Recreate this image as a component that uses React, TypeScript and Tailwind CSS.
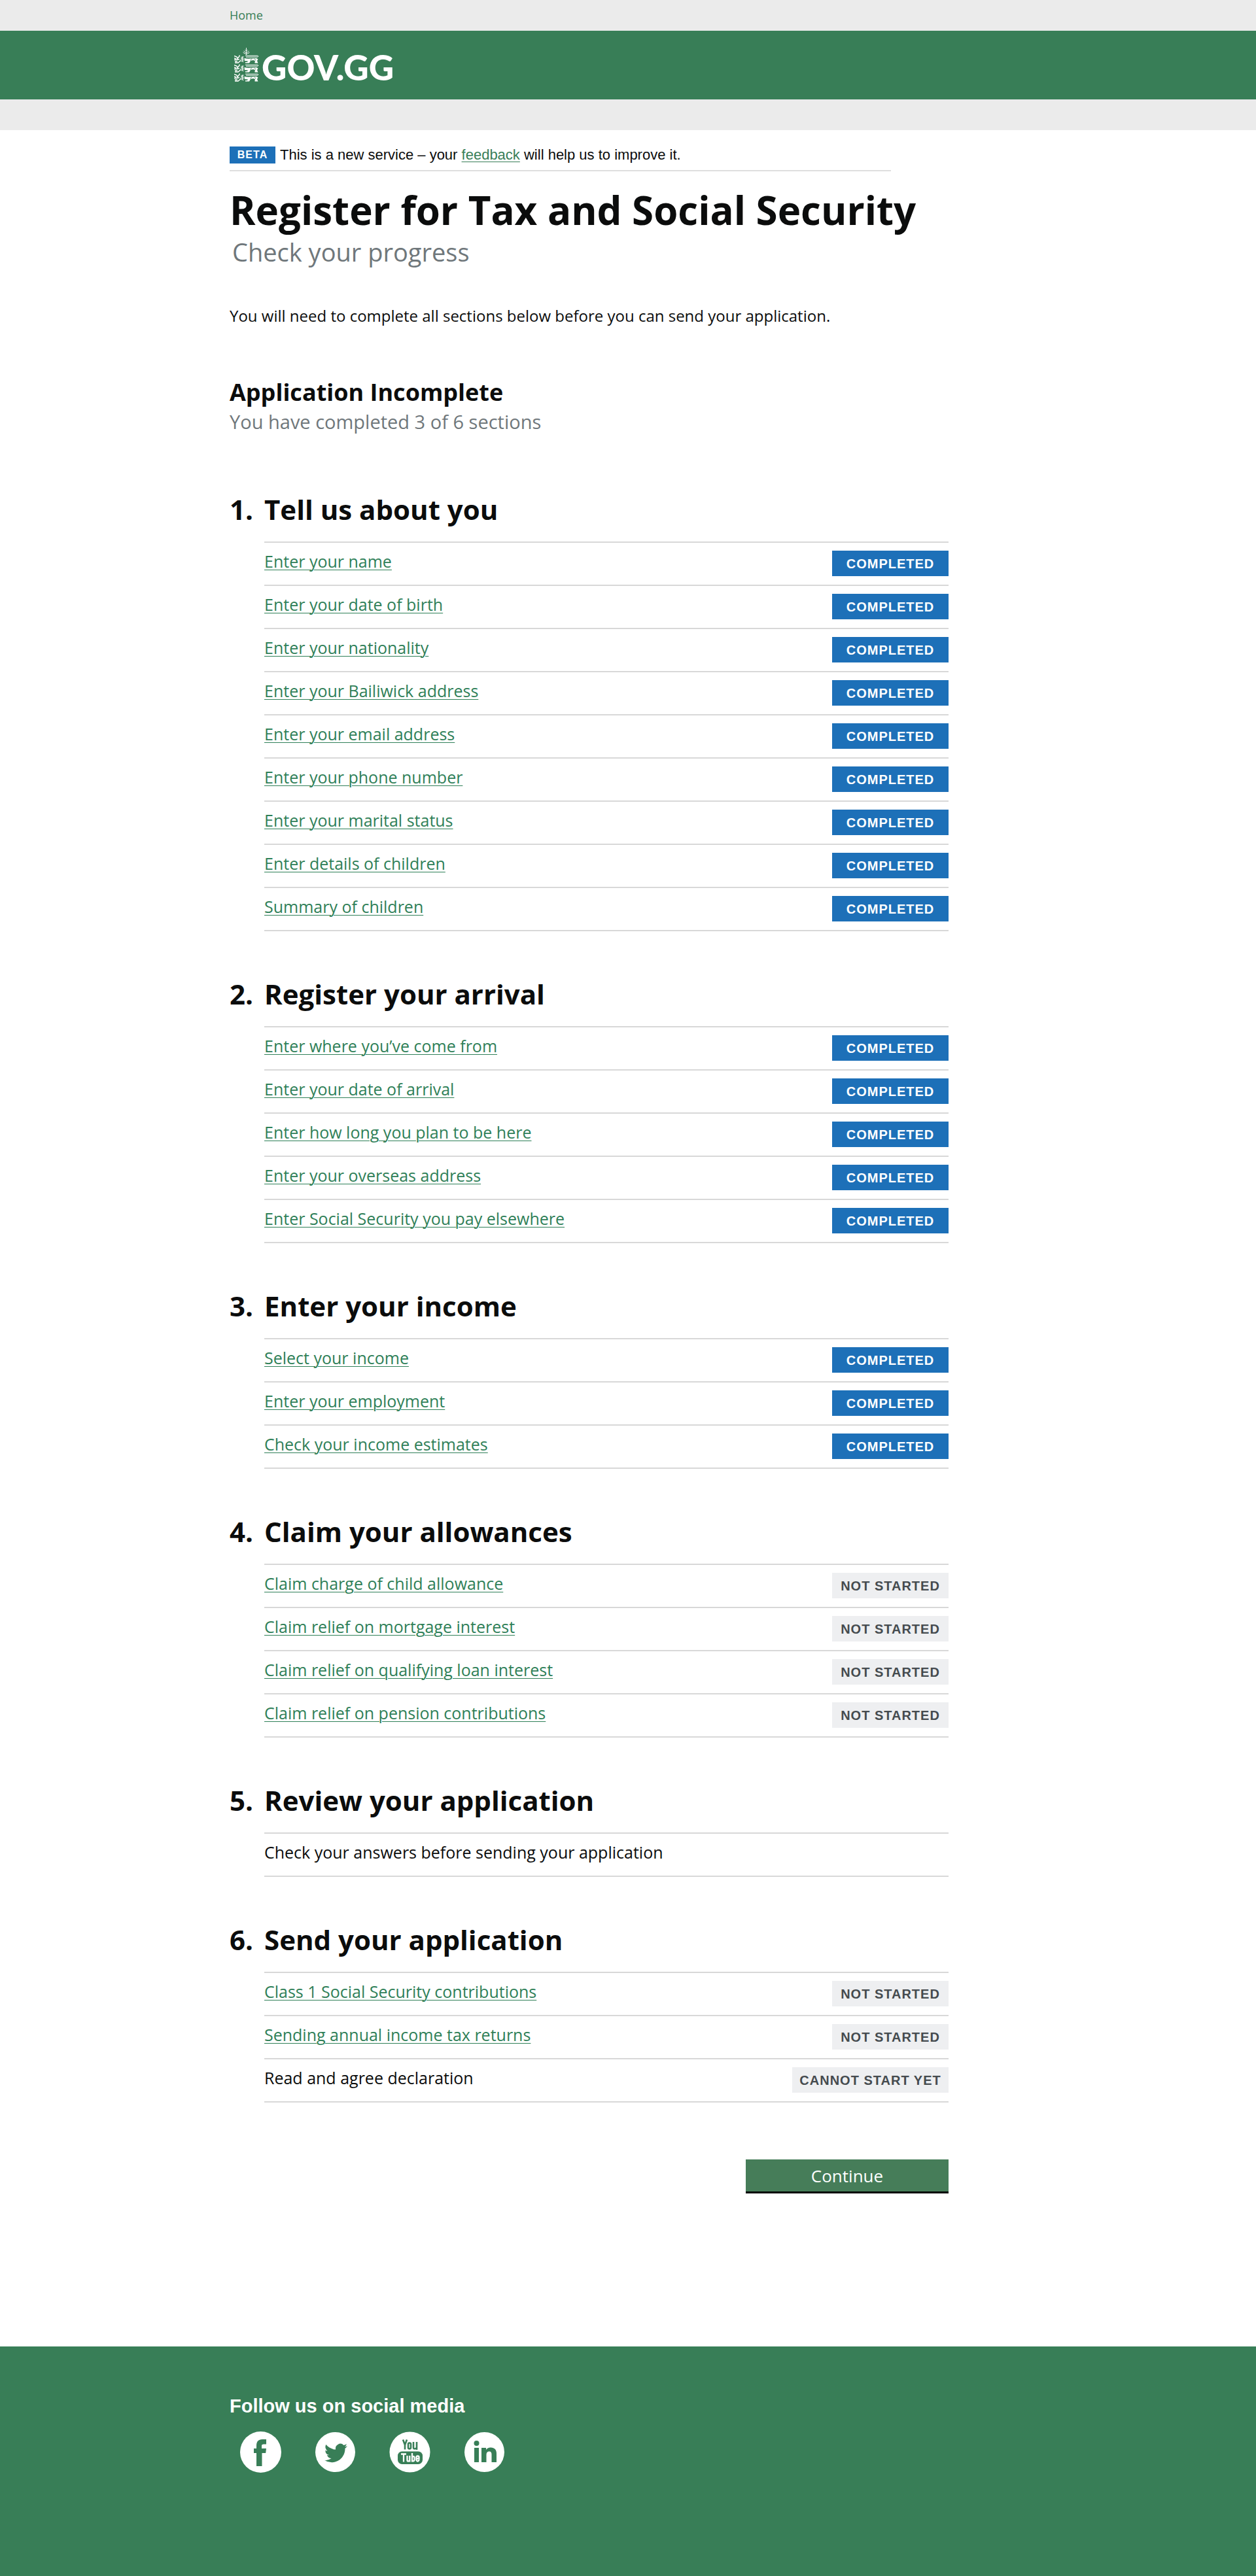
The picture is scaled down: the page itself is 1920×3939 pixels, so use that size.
import type { ReactNode } from "react";

type Status = "completed" | "not-started" | "cannot-start";

interface Task {
  label: string;
  status?: Status;
  plain?: boolean;
}

interface Section {
  title: string;
  tasks: Task[];
}

const done = (label: string): Task => ({ label, status: "completed" });
const todo = (label: string): Task => ({ label, status: "not-started" });

const sections: Section[] = [
  {
    title: "Tell us about you",
    tasks: [
      done("Enter your name"),
      done("Enter your date of birth"),
      done("Enter your nationality"),
      done("Enter your Bailiwick address"),
      done("Enter your email address"),
      done("Enter your phone number"),
      done("Enter your marital status"),
      done("Enter details of children"),
      done("Summary of children"),
    ],
  },
  {
    title: "Register your arrival",
    tasks: [
      done("Enter where you’ve come from"),
      done("Enter your date of arrival"),
      done("Enter how long you plan to be here"),
      done("Enter your overseas address"),
      done("Enter Social Security you pay elsewhere"),
    ],
  },
  {
    title: "Enter your income",
    tasks: [done("Select your income"), done("Enter your employment"), done("Check your income estimates")],
  },
  {
    title: "Claim your allowances",
    tasks: [
      todo("Claim charge of child allowance"),
      todo("Claim relief on mortgage interest"),
      todo("Claim relief on qualifying loan interest"),
      todo("Claim relief on pension contributions"),
    ],
  },
  {
    title: "Review your application",
    tasks: [{ label: "Check your answers before sending your application", plain: true }],
  },
  {
    title: "Send your application",
    tasks: [
      todo("Class 1 Social Security contributions"),
      todo("Sending annual income tax returns"),
      { label: "Read and agree declaration", status: "cannot-start", plain: true },
    ],
  },
];

const statusText: Record<Status, string> = {
  completed: "COMPLETED",
  "not-started": "NOT STARTED",
  "cannot-start": "CANNOT START YET",
};

const statusStyle: Record<Status, string> = {
  completed: "w-[178px] bg-[#1d70b8] text-white",
  "not-started": "w-[178px] bg-[#eeeff1] text-[#454b4f]",
  "cannot-start": "w-[239px] bg-[#eeeff1] text-[#454b4f]",
};

function Container({ children }: { children: ReactNode }) {
  return <div className="mx-auto w-full max-w-[1218px]">{children}</div>;
}

function Lion({ y }: { y: number }) {
  return (
    <g transform={`translate(0 ${y})`} fill="none" stroke="#fff">
      <path
        d="M0 1.500l4 1.500 1 2M8.500 .5Q7.500 4 4 6M0 7.500h4l4-1M0 5l3 1M1 12h5l4-3.500M1 10h4"
        strokeWidth="1.500"
      />
      <path d="M10 3l2 1.500 3-2M10 5.500l5 .5M9.500 7.500l5.500 .5M10.500 9.500l4 1M12.500 2v8" strokeWidth="0.900" />
      <path d="M17 1.200h18.500l1.500 1-1.500 1H18" strokeWidth="1" />
      <path
        d="M15.500 5Q20 6 25 5.500T34 5l2.500 1.500L35 9l1.500 3.500h-5V11L32 9l-3-1-4 1-2 3.500h-6v-1.500h3l1-1.500-5-.5z"
        fill="#fff"
        stroke="none"
      />
      <path d="M27 5.500l-2 2.500 2 3.500M31 5.500l2 3" stroke="#387e57" strokeWidth="0.800" />
    </g>
  );
}

function Crest() {
  return (
    <svg className="h-[52px] w-[38px]" viewBox="0 0 38 52" aria-hidden="true">
      <g stroke="#fff" strokeWidth="0.900" fill="none">
        <path d="M18.500 0v11M16.500 3l2 2 2-2M14.500 5l4 3 4-3M15 8l3.500 2L22 8M13.500 7l2 1.500M23.500 7l-2 1.500" />
      </g>
      <Lion y={11} />
      <Lion y={25} />
      <Lion y={39} />
    </svg>
  );
}

function TaskRow({ task }: { task: Task }) {
  return (
    <li className="flex h-[66px] items-start justify-between border-t-2 border-[#d8d8d8]">
      {task.plain ? (
        <span className="pt-3 text-[25px] leading-8">{task.label}</span>
      ) : (
        <a
          href="#"
          className="pt-3 text-[25px] leading-8 text-[#2f8058] underline decoration-1 underline-offset-3"
        >
          {task.label}
        </a>
      )}
      {task.status && (
        <strong
          className={`mt-3 flex h-[39px] items-center justify-center font-['Liberation_Sans',sans-serif] text-xl leading-6 font-bold tracking-[1px] ${statusStyle[task.status]}`}
        >
          {statusText[task.status]}
        </strong>
      )}
    </li>
  );
}

function SocialLinks() {
  return (
    <ul className="mt-[19px] flex gap-[51px] pl-4">
      <li>
        <a href="#" aria-label="Facebook" className="block">
          <svg className="size-[63px]" viewBox="0 0 63 63">
            <circle cx="31.500" cy="31.500" r="31.500" fill="#fff" />
            <path
              d="M25 53V33h-4v-7h4v-4.500C25 15.500 28 12 34 12h6v7.500h-4c-2.200 0-3 .8-3 2.800V26h7l-.8 7H33.500v20z"
              fill="#387e57"
            />
          </svg>
        </a>
      </li>
      <li>
        <a href="#" aria-label="Twitter" className="block">
          <svg className="size-[63px]" viewBox="0 0 63 63">
            <circle cx="31.500" cy="31.500" r="30.500" fill="#fff" />
            <path
              transform="translate(15 15.500) scale(1.460)"
              d="M23.950 4.570a10 10 0 0 1-2.820.770 4.960 4.960 0 0 0 2.160-2.720c-.950.550-2 .960-3.130 1.180a4.920 4.920 0 0 0-8.380 4.480C7.690 8.090 4.070 6.130 1.640 3.160a4.920 4.920 0 0 0 1.520 6.570 4.900 4.900 0 0 1-2.230-.610v.060a4.920 4.920 0 0 0 3.950 4.830 5 5 0 0 1-2.210.080 4.940 4.940 0 0 0 4.600 3.420A9.870 9.870 0 0 1 0 19.540a14 14 0 0 0 7.550 2.210c9.050 0 14-7.500 14-13.980 0-.210 0-.420-.020-.630a9.900 9.900 0 0 0 2.420-2.570z"
              fill="#387e57"
            />
          </svg>
        </a>
      </li>
      <li>
        <a href="#" aria-label="YouTube" className="block">
          <svg className="size-[63px]" viewBox="0 0 63 63">
            <circle cx="31.500" cy="31.500" r="31" fill="#fff" />
            <g fill="none" stroke="#387e57" strokeWidth="2.600">
              <path d="M21 12.500l3 8 3-8M24 19.500v8" />
              <rect x="29" y="17.500" width="4" height="9" rx="2" />
              <path d="M37 16v8.500q0 2 2 2t3-2V16v12" />
            </g>
            <rect x="13" y="30.500" width="38" height="19.500" rx="6.500" fill="#387e57" />
            <g fill="none" stroke="#fff" strokeWidth="2.300">
              <path d="M18 34.500h8M22 34v12.500M27.500 37v7q0 1.500 1.500 1.500t2.300-1.500V37v9.500M35 33v13.500M35 39q3-2 3.500.5v4q-.5 3-3.500 1M45.500 43v.5q-.5 2-2 2t-2-2v-4q0-2 2-2t2 2v2h-4" />
            </g>
          </svg>
        </a>
      </li>
      <li>
        <a href="#" aria-label="LinkedIn" className="block">
          <svg className="size-[63px]" viewBox="0 0 63 63">
            <circle cx="31.500" cy="31.500" r="30.500" fill="#fff" />
            <circle cx="19.500" cy="18" r="4" fill="#387e57" />
            <path
              d="M16 25h7v22h-7zM27 25h7v3c1.500-2.300 3.800-3.500 7-3.500 6 0 9 3.500 9 9.500v13h-7.500V35c0-3-1.200-4.500-3.500-4.500-2.800 0-4.500 1.800-4.500 5V47H27z"
              fill="#387e57"
            />
          </svg>
        </a>
      </li>
    </ul>
  );
}

export default function App() {
  return (
    <div className="flex min-h-screen flex-col bg-white font-['Open_Sans',sans-serif] text-[#0b0c0c]">
      <nav className="flex h-[47px] items-center bg-[#ebebeb]">
        <Container>
          <a href="#" className="text-lg leading-6 text-[#387e57]">
            Home
          </a>
        </Container>
      </nav>
      <header className="flex h-[105px] items-center bg-[#387e57]">
        <Container>
          <a href="#" aria-label="GOV.GG" className="flex w-fit items-start gap-1 pl-[7px] text-white">
            <Crest />
            <span className="pt-1.5 font-[Lato,sans-serif] text-[53px] leading-[48px] font-black">GOV.GG</span>
          </a>
        </Container>
      </header>
      <div className="h-[47px] bg-[#ebebeb]" />

      <main className="grow">
        <Container>
          <div className="mt-[25px] flex max-w-[1011px] items-center gap-[7px] border-b-2 border-[#dedede] pb-2.5 font-['Liberation_Sans',sans-serif]">
            <strong className="flex h-[26px] w-[70px] items-center justify-center bg-[#1d70b8] text-base font-bold tracking-[1px] text-white">
              BETA
            </strong>
            <p className="text-[22px] leading-[26px]">
              This is a new service – your{" "}
              <a href="#" className="text-[#387e57] underline decoration-1 underline-offset-3">
                feedback
              </a>{" "}
              will help us to improve it.
            </p>
          </div>

          <h1 className="mt-[19px] text-[60px] leading-[80px] font-bold">Register for Tax and Social Security</h1>
          <p className="pl-1 text-[38px] leading-[48px] text-[#6f777b]">Check your progress</p>
          <p className="mt-[58px] text-2xl leading-8">
            You will need to complete all sections below before you can send your application.
          </p>
          <h2 className="mt-[75px] text-4xl leading-[52px] font-bold">Application Incomplete</h2>
          <p className="text-[29px] leading-[38px] text-[#6f777b]">You have completed 3 of 6 sections</p>

          <ol className="mt-[85px] flex max-w-[1099px] flex-col gap-[66px]">
            {sections.map((section, i) => (
              <li key={section.title} className="grid grid-cols-[53px_1fr]">
                <span className="text-[42px] leading-[60px] font-bold">{i + 1}.</span>
                <h2 className="pb-[19px] text-[42px] leading-[60px] font-bold">{section.title}</h2>
                <ul className="col-start-2 border-b-2 border-[#d8d8d8]">
                  {section.tasks.map((task) => (
                    <TaskRow key={task.label} task={task} />
                  ))}
                </ul>
              </li>
            ))}
          </ol>

          <div className="mt-[87px] flex max-w-[1099px] justify-end">
            <button
              type="button"
              className="h-[52px] w-[310px] border-b-3 border-black bg-[#467d59] text-[26px] leading-8 text-white"
            >
              Continue
            </button>
          </div>
        </Container>
      </main>

      <footer className="h-[351px] bg-[#387e57] pt-[71px]">
        <Container>
          <h2 className="font-['Liberation_Sans',sans-serif] text-[29px] leading-10 font-bold text-white">
            Follow us on social media
          </h2>
          <SocialLinks />
        </Container>
      </footer>
    </div>
  );
}
